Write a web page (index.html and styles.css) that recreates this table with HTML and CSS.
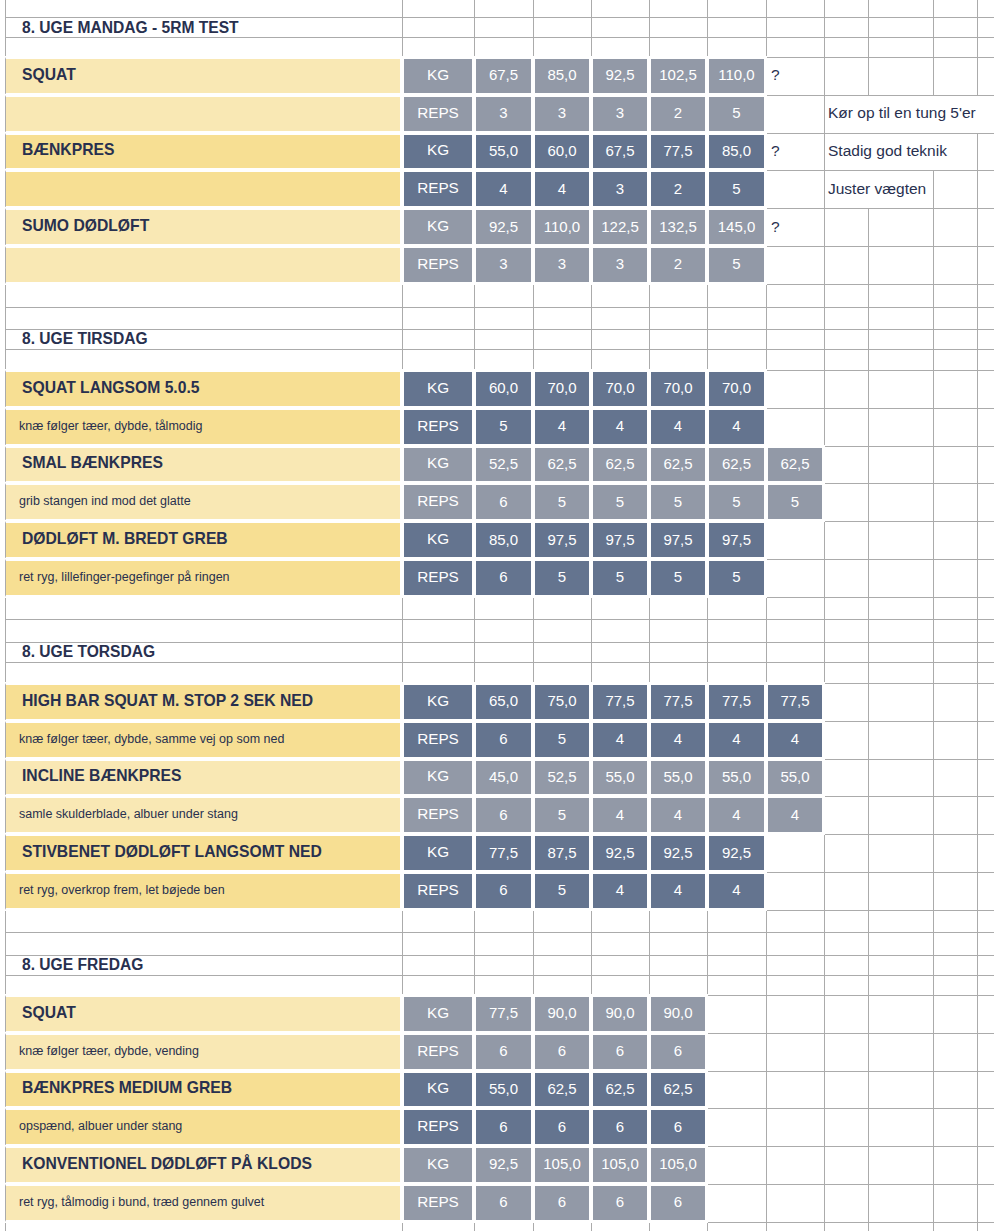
FILE: index.html
```html
<!DOCTYPE html>
<html lang="da">
<head>
<meta charset="utf-8">
<title>8. uge</title>
<link rel="stylesheet" href="styles.css">
</head>
<body>
<div class="sheet">
  <div class="row top"><div></div><div></div><div></div><div></div><div></div><div></div><div></div><div></div><div></div><div></div><div></div><div></div></div>

  <!-- MANDAG -->
  <div class="row hd"><div class="title">8. UGE MANDAG - 5RM TEST</div><div></div><div></div><div></div><div></div><div></div><div></div><div></div><div></div><div></div><div></div><div></div></div>
  <div class="row b20"><div></div><div></div><div></div><div></div><div></div><div></div><div></div><div></div><div></div><div></div><div></div><div></div></div>
  <div class="row ex">
    <div class="f a y1 name">SQUAT</div><div class="f g1 lbl">KG</div>
    <div class="f g1">67,5</div><div class="f g1">85,0</div><div class="f g1">92,5</div><div class="f g1">102,5</div><div class="f g1">110,0</div>
    <div class="q">?</div><div></div><div></div><div></div><div></div>
  </div>
  <div class="row ex">
    <div class="f a y1"></div><div class="f g1 lbl">REPS</div>
    <div class="f g1">3</div><div class="f g1">3</div><div class="f g1">3</div><div class="f g1">2</div><div class="f g1">5</div>
    <div></div><div class="cm s4">Kør op til en tung 5'er</div>
  </div>
  <div class="row ex">
    <div class="f a y2 name">BÆNKPRES</div><div class="f g2 lbl">KG</div>
    <div class="f g2">55,0</div><div class="f g2">60,0</div><div class="f g2">67,5</div><div class="f g2">77,5</div><div class="f g2">85,0</div>
    <div class="q">?</div><div class="cm s3">Stadig god teknik</div><div></div>
  </div>
  <div class="row ex">
    <div class="f a y2"></div><div class="f g2 lbl">REPS</div>
    <div class="f g2">4</div><div class="f g2">4</div><div class="f g2">3</div><div class="f g2">2</div><div class="f g2">5</div>
    <div></div><div class="cm s2">Juster vægten</div><div></div><div></div>
  </div>
  <div class="row ex">
    <div class="f a y1 name">SUMO DØDLØFT</div><div class="f g1 lbl">KG</div>
    <div class="f g1">92,5</div><div class="f g1">110,0</div><div class="f g1">122,5</div><div class="f g1">132,5</div><div class="f g1">145,0</div>
    <div class="q">?</div><div></div><div></div><div></div><div></div>
  </div>
  <div class="row ex">
    <div class="f a y1"></div><div class="f g1 lbl">REPS</div>
    <div class="f g1">3</div><div class="f g1">3</div><div class="f g1">3</div><div class="f g1">2</div><div class="f g1">5</div>
    <div></div><div></div><div></div><div></div><div></div>
  </div>
  <div class="row b232"><div></div><div></div><div></div><div></div><div></div><div></div><div></div><div></div><div></div><div></div><div></div><div></div></div>
  <div class="row b22"><div></div><div></div><div></div><div></div><div></div><div></div><div></div><div></div><div></div><div></div><div></div><div></div></div>

  <!-- TIRSDAG -->
  <div class="row hd"><div class="title">8. UGE TIRSDAG</div><div></div><div></div><div></div><div></div><div></div><div></div><div></div><div></div><div></div><div></div><div></div></div>
  <div class="row b21"><div></div><div></div><div></div><div></div><div></div><div></div><div></div><div></div><div></div><div></div><div></div><div></div></div>
  <div class="row ex">
    <div class="f a y2 name">SQUAT LANGSOM 5.0.5</div><div class="f g2 lbl">KG</div>
    <div class="f g2">60,0</div><div class="f g2">70,0</div><div class="f g2">70,0</div><div class="f g2">70,0</div><div class="f g2">70,0</div>
    <div></div><div></div><div></div><div></div><div></div>
  </div>
  <div class="row ex">
    <div class="f a y2 note">knæ følger tæer, dybde, tålmodig</div><div class="f g2 lbl">REPS</div>
    <div class="f g2">5</div><div class="f g2">4</div><div class="f g2">4</div><div class="f g2">4</div><div class="f g2">4</div>
    <div></div><div></div><div></div><div></div><div></div>
  </div>
  <div class="row ex">
    <div class="f a y1 name">SMAL BÆNKPRES</div><div class="f g1 lbl">KG</div>
    <div class="f g1">52,5</div><div class="f g1">62,5</div><div class="f g1">62,5</div><div class="f g1">62,5</div><div class="f g1">62,5</div><div class="f g1">62,5</div>
    <div></div><div></div><div></div><div></div>
  </div>
  <div class="row ex">
    <div class="f a y1 note">grib stangen ind mod det glatte</div><div class="f g1 lbl">REPS</div>
    <div class="f g1">6</div><div class="f g1">5</div><div class="f g1">5</div><div class="f g1">5</div><div class="f g1">5</div><div class="f g1">5</div>
    <div></div><div></div><div></div><div></div>
  </div>
  <div class="row ex">
    <div class="f a y2 name">DØDLØFT M. BREDT GREB</div><div class="f g2 lbl">KG</div>
    <div class="f g2">85,0</div><div class="f g2">97,5</div><div class="f g2">97,5</div><div class="f g2">97,5</div><div class="f g2">97,5</div>
    <div></div><div></div><div></div><div></div><div></div>
  </div>
  <div class="row ex">
    <div class="f a y2 note">ret ryg, lillefinger-pegefinger på ringen</div><div class="f g2 lbl">REPS</div>
    <div class="f g2">6</div><div class="f g2">5</div><div class="f g2">5</div><div class="f g2">5</div><div class="f g2">5</div>
    <div></div><div></div><div></div><div></div><div></div>
  </div>
  <div class="row b222"><div></div><div></div><div></div><div></div><div></div><div></div><div></div><div></div><div></div><div></div><div></div><div></div></div>
  <div class="row b23"><div></div><div></div><div></div><div></div><div></div><div></div><div></div><div></div><div></div><div></div><div></div><div></div></div>

  <!-- TORSDAG -->
  <div class="row hd"><div class="title">8. UGE TORSDAG</div><div></div><div></div><div></div><div></div><div></div><div></div><div></div><div></div><div></div><div></div><div></div></div>
  <div class="row b21"><div></div><div></div><div></div><div></div><div></div><div></div><div></div><div></div><div></div><div></div><div></div><div></div></div>
  <div class="row ex">
    <div class="f a y2 name">HIGH BAR SQUAT M. STOP 2 SEK NED</div><div class="f g2 lbl">KG</div>
    <div class="f g2">65,0</div><div class="f g2">75,0</div><div class="f g2">77,5</div><div class="f g2">77,5</div><div class="f g2">77,5</div><div class="f g2">77,5</div>
    <div></div><div></div><div></div><div></div>
  </div>
  <div class="row ex">
    <div class="f a y2 note">knæ følger tæer, dybde, samme vej op som ned</div><div class="f g2 lbl">REPS</div>
    <div class="f g2">6</div><div class="f g2">5</div><div class="f g2">4</div><div class="f g2">4</div><div class="f g2">4</div><div class="f g2">4</div>
    <div></div><div></div><div></div><div></div>
  </div>
  <div class="row ex">
    <div class="f a y1 name">INCLINE BÆNKPRES</div><div class="f g1 lbl">KG</div>
    <div class="f g1">45,0</div><div class="f g1">52,5</div><div class="f g1">55,0</div><div class="f g1">55,0</div><div class="f g1">55,0</div><div class="f g1">55,0</div>
    <div></div><div></div><div></div><div></div>
  </div>
  <div class="row ex">
    <div class="f a y1 note">samle skulderblade, albuer under stang</div><div class="f g1 lbl">REPS</div>
    <div class="f g1">6</div><div class="f g1">5</div><div class="f g1">4</div><div class="f g1">4</div><div class="f g1">4</div><div class="f g1">4</div>
    <div></div><div></div><div></div><div></div>
  </div>
  <div class="row ex">
    <div class="f a y2 name">STIVBENET DØDLØFT LANGSOMT NED</div><div class="f g2 lbl">KG</div>
    <div class="f g2">77,5</div><div class="f g2">87,5</div><div class="f g2">92,5</div><div class="f g2">92,5</div><div class="f g2">92,5</div>
    <div></div><div></div><div></div><div></div><div></div>
  </div>
  <div class="row ex">
    <div class="f a y2 note">ret ryg, overkrop frem, let bøjede ben</div><div class="f g2 lbl">REPS</div>
    <div class="f g2">6</div><div class="f g2">5</div><div class="f g2">4</div><div class="f g2">4</div><div class="f g2">4</div>
    <div></div><div></div><div></div><div></div><div></div>
  </div>
  <div class="row b222"><div></div><div></div><div></div><div></div><div></div><div></div><div></div><div></div><div></div><div></div><div></div><div></div></div>
  <div class="row b23"><div></div><div></div><div></div><div></div><div></div><div></div><div></div><div></div><div></div><div></div><div></div><div></div></div>

  <!-- FREDAG -->
  <div class="row hd"><div class="title">8. UGE FREDAG</div><div></div><div></div><div></div><div></div><div></div><div></div><div></div><div></div><div></div><div></div><div></div></div>
  <div class="row b20"><div></div><div></div><div></div><div></div><div></div><div></div><div></div><div></div><div></div><div></div><div></div><div></div></div>
  <div class="row ex">
    <div class="f a y1 name">SQUAT</div><div class="f g1 lbl">KG</div>
    <div class="f g1">77,5</div><div class="f g1">90,0</div><div class="f g1">90,0</div><div class="f g1">90,0</div>
    <div></div><div></div><div></div><div></div><div></div><div></div>
  </div>
  <div class="row ex">
    <div class="f a y1 note">knæ følger tæer, dybde, vending</div><div class="f g1 lbl">REPS</div>
    <div class="f g1">6</div><div class="f g1">6</div><div class="f g1">6</div><div class="f g1">6</div>
    <div></div><div></div><div></div><div></div><div></div><div></div>
  </div>
  <div class="row ex">
    <div class="f a y2 name">BÆNKPRES MEDIUM GREB</div><div class="f g2 lbl">KG</div>
    <div class="f g2">55,0</div><div class="f g2">62,5</div><div class="f g2">62,5</div><div class="f g2">62,5</div>
    <div></div><div></div><div></div><div></div><div></div><div></div>
  </div>
  <div class="row ex">
    <div class="f a y2 note">opspænd, albuer under stang</div><div class="f g2 lbl">REPS</div>
    <div class="f g2">6</div><div class="f g2">6</div><div class="f g2">6</div><div class="f g2">6</div>
    <div></div><div></div><div></div><div></div><div></div><div></div>
  </div>
  <div class="row ex">
    <div class="f a y1 name">KONVENTIONEL DØDLØFT PÅ KLODS</div><div class="f g1 lbl">KG</div>
    <div class="f g1">92,5</div><div class="f g1">105,0</div><div class="f g1">105,0</div><div class="f g1">105,0</div>
    <div></div><div></div><div></div><div></div><div></div><div></div>
  </div>
  <div class="row ex">
    <div class="f a y1 note">ret ryg, tålmodig i bund, træd gennem gulvet</div><div class="f g1 lbl">REPS</div>
    <div class="f g1">6</div><div class="f g1">6</div><div class="f g1">6</div><div class="f g1">6</div>
    <div></div><div></div><div></div><div></div><div></div><div></div>
  </div>
  <div class="row end"><div></div><div></div><div></div><div></div><div></div><div></div><div></div><div></div><div></div><div></div><div></div><div></div></div>
</div>
</body>
</html>
```

FILE: styles.css
```css
html, body {
  margin: 0;
  padding: 0;
  overflow: hidden;
  background: #ffffff;
}

body {
  font-family: "Liberation Sans", Arial, Helvetica, sans-serif;
  color: #28304f;
}

.sheet {
  margin-left: 5px;
  width: 989px;
}

.row {
  display: grid;
  grid-template-columns: 397px 72px 59px 58px 58px 58px 59px 58px 44px 65px 44px 17px;
}

.row > div {
  box-sizing: border-box;
  border-left: 1px solid #ababab;
  border-top: 1px solid #ababab;
  display: flex;
  align-items: center;
  min-width: 0;
  white-space: nowrap;
  font-size: 15px;
}

.top > div { border-top: 0; }

.top { height: 17px; }
.hd { height: 20px; }
.b20 { height: 20px; }
.b21 { height: 21px; }
.b22 { height: 22px; }
.b23 { height: 23px; }
.b222 { height: 22.2px; }
.b232 { height: 23.2px; }
.ex { height: 37.8px; }
.end { height: 9px; }

.row > .title {
  font-weight: bold;
  font-size: 15.6px;
  padding-left: 16px;
}

/* filled cells */
.row > .f {
  border: 2px solid #ffffff;
  box-shadow: 0 0 0 1px #ffffff;
  position: relative;
  z-index: 1;
  justify-content: center;
  color: #ffffff;
  font-size: 15px;
  padding-bottom: 2px;
}

.row > .f.a {
  border-left: 1px solid #ababab;
  justify-content: flex-start;
  color: #28304f;
}

.row > .name {
  font-weight: bold;
  font-size: 15.7px;
  padding-left: 16px;
}

.row > .note {
  font-size: 12.5px;
  padding-left: 13px;
}

.row > .lbl { font-size: 15.3px; }

.y1 { background: #f9e8b4; }
.y2 { background: #f7df93; }
.g1 { background: #9299a7; }
.g2 { background: #64748f; }

.row > .q {
  padding-left: 4px;
  padding-bottom: 2px;
  font-size: 15.5px;
}

.row > .cm {
  padding-left: 3px;
  padding-bottom: 2px;
  font-size: 15.5px;
}

.s2 { grid-column: span 2; }
.s3 { grid-column: span 3; }
.s4 { grid-column: span 4; }
```
